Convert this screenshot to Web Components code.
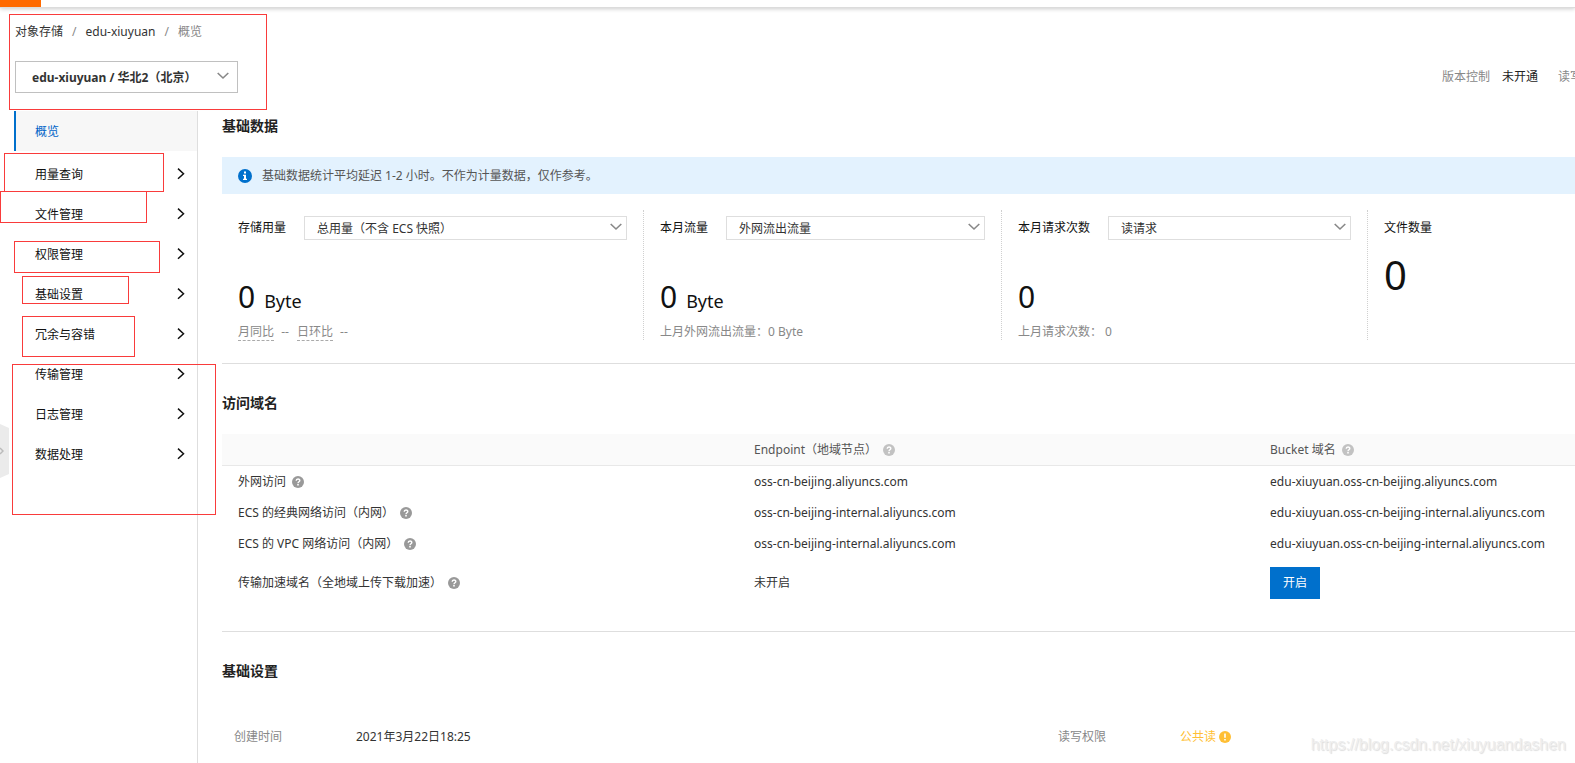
<!DOCTYPE html>
<html lang="zh-CN">
<head>
<meta charset="utf-8">
<meta name="viewport" content="width=device-width, initial-scale=1">
<title>对象存储 - 概览</title>
<style>
    body {
        margin: 0;
        background: #fff;
        color: #333;
        font: 12px/16px "Noto Sans", "Noto Sans CJK SC", sans-serif;
    }
</style>
</head>
<body>
<oss-console></oss-console>

<script>
    // Small helper: attach an open shadow root with styles and markup
    function render(element, css, html) {
        element.attachShadow({ mode: 'open' });
        const template = document.createElement('template');
        template.innerHTML = `<style>* { box-sizing: border-box; }${css}</style>${html}`;
        element.shadowRoot.appendChild(template.content.cloneNode(true));
    }

    // Icon set
    const icons = {
        down: '<svg width="12" height="8" viewBox="0 0 12 8" fill="none" stroke="currentColor" stroke-width="1.6"><path d="M.7 1 6 6 11.3 1"/></svg>',
        right: '<svg width="8" height="12" viewBox="0 0 8 12" fill="none" stroke="currentColor" stroke-width="1.5"><path d="M1 .6 6.5 5.7 1 10.8"/></svg>',
        help: '<svg width="12" height="12" viewBox="0 0 12 12"><circle cx="6" cy="6" r="6" fill="currentColor"/><path d="M4.2 4.8C4.2 2.5 7.8 2.5 7.8 4.6 7.8 5.8 6 5.8 6 7.2" fill="none" stroke="#fff" stroke-width="1.4"/><path d="M5.2 8h1.6v1.5H5.2z" fill="#fff"/></svg>',
        info: '<svg width="14" height="14" viewBox="0 0 14 14"><circle cx="7" cy="7" r="7" fill="currentColor"/><path d="M6 2.6h2v2H6zM5 5.7h3v4h1v1.4H5V9.7h1V7H5z" fill="#fff"/></svg>',
        warn: '<svg width="12" height="12" viewBox="0 0 12 12"><circle cx="6" cy="6" r="6" fill="currentColor"/><path d="M5.2 2.5h1.6v4.3H5.2zM5.2 7.9h1.6v1.6H5.2z" fill="#fff"/></svg>'
    };

    class OssIcon extends HTMLElement {
        constructor() {
            super();
            render(this, /*css*/`
                :host { display: inline-flex; flex: none; vertical-align: -2px; }
                svg { display: block; }
            `, icons[this.getAttribute('name')]);
        }
    }
    customElements.define('oss-icon', OssIcon);

    // Drop-down with an optional label in front
    class OssSelect extends HTMLElement {
        constructor() {
            super();
            const label = this.getAttribute('label');
            render(this, /*css*/`
                :host { display: flex; align-items: center; gap: 18px; color: #111; }
                label { flex: none; }
                .box { position: relative; flex: 1; min-width: 0; color: #888; }
                select {
                    display: block;
                    appearance: none;
                    width: 100%;
                    height: var(--select-height, 24px);
                    padding: 2px 24px 0 var(--select-indent, 12px);
                    border: 1px solid var(--select-border, #dedede);
                    border-radius: 0;
                    background: #fff;
                    color: #333;
                    font: inherit;
                }
                oss-icon { position: absolute; right: var(--select-arrow, 5px); top: 50%; margin-top: -5px; pointer-events: none; }
            `, `
                ${label ? `<label for="field">${label}</label>` : ''}
                <div class="box">
                    <select id="field" ${label ? '' : 'aria-label="Bucket"'}><option>${this.getAttribute('value')}</option></select>
                    <oss-icon name="down"></oss-icon>
                </div>
            `);
        }
    }
    customElements.define('oss-select', OssSelect);

    class OssTopbar extends HTMLElement {
        constructor() {
            super();
            render(this, /*css*/`
                :host { display: block; flex: none; border-bottom: 1px solid #dcdcdc; box-shadow: 0 1px 4px rgba(0, 0, 0, 0.2); }
                .brand { width: 41px; height: 7px; background: #ff6a00; }
            `, '<div class="brand"></div>');
        }
    }
    customElements.define('oss-topbar', OssTopbar);

    class OssHeader extends HTMLElement {
        constructor() {
            super();
            render(this, /*css*/`
                :host { display: block; padding: 16px 0 18px 15px; overflow: hidden; }
                nav { display: flex; gap: 9px; color: #888; }
                a { color: #333; text-decoration: none; }
                .row { display: flex; align-items: center; margin-top: 21px; }
                oss-select {
                    --select-height: 32px;
                    --select-indent: 16px;
                    --select-border: #c0c0c0;
                    --select-arrow: 9px;
                    width: 223px;
                    font-weight: bold;
                }
                .status { display: flex; gap: 12px; margin: 0 -7px 0 auto; color: #888; white-space: nowrap; }
                .status b { margin-right: 8px; color: #222; font-weight: normal; }
            `, /*html*/`
                <nav><a href="#">对象存储</a><span>/</span><a href="#">edu-xiuyuan</a><span>/</span><span>概览</span></nav>
                <div class="row">
                    <oss-select value="edu-xiuyuan / 华北2（北京）"></oss-select>
                    <div class="status"><span>版本控制</span><b>未开通</b><span>读写</span></div>
                </div>
            `);
        }
    }
    customElements.define('oss-header', OssHeader);

    class OssNav extends HTMLElement {
        constructor() {
            super();
            const items = ['用量查询', '文件管理', '权限管理', '基础设置', '冗余与容错', '传输管理', '日志管理', '数据处理'];
            render(this, /*css*/`
                :host { display: block; flex: none; width: 184px; margin-left: 14px; border-right: 1px solid #dedede; }
                a {
                    display: flex;
                    align-items: center;
                    justify-content: space-between;
                    height: 40px;
                    padding: 0 12px 0 21px;
                    color: #111;
                    text-decoration: none;
                }
                span { padding-top: 2px; }
                a.active {
                    margin-bottom: 3px;
                    padding-left: 19px;
                    border-left: 2px solid #0070cc;
                    background: #f7f7f7;
                    color: #0064c8;
                }
            `, `
                <nav>
                    <a class="active" href="#"><span>概览</span></a>
                    ${items.map(item => `<a href="#"><span>${item}</span><oss-icon name="right"></oss-icon></a>`).join('')}
                </nav>
            `);
        }
    }
    customElements.define('oss-nav', OssNav);

    class OssSection extends HTMLElement {
        constructor() {
            super();
            render(this, /*css*/`
                :host { display: block; padding: 29px 0 23px; border-bottom: 1px solid #dedede; }
                :host(:first-child) { padding-top: 5px; }
                :host(:last-child) { border-bottom: 0; padding-bottom: 0; }
                h2 { margin: 0 0 21px; color: #222; font-size: 14px; line-height: 20px; font-weight: bold; }
            `, `<h2>${this.getAttribute('heading')}</h2><slot></slot>`);
        }
    }
    customElements.define('oss-section', OssSection);

    class OssNotice extends HTMLElement {
        constructor() {
            super();
            render(this, /*css*/`
                :host { display: flex; align-items: center; gap: 10px; height: 37px; padding: 0 16px; background: #e3f2fe; color: #555; }
                oss-icon { color: #0070cc; }
            `, '<oss-icon name="info"></oss-icon><span><slot></slot></span>');
        }
    }
    customElements.define('oss-notice', OssNotice);

    // One figure: title or drop-down, value with unit, and a footer line in the slot
    class OssMetric extends HTMLElement {
        constructor() {
            super();
            const label = this.getAttribute('label');
            const value = this.getAttribute('value');
            const unit = this.getAttribute('unit');
            render(this, /*css*/`
                :host { display: block; height: 130px; padding: 6px 16px 0; border-right: 1px dotted #d0d0d0; color: #111; }
                :host(:last-child) { border-right: 0; }
                .title { line-height: 24px; }
                .value { display: flex; align-items: baseline; gap: 9px; margin: 37px 0 7px; font-size: 30px; line-height: 40px; }
                .unit { font-size: 18px; line-height: 20px; }
                .title + .value { margin-top: 15px; font-size: 40px; }
                .note { color: #888; }
            `, `
                ${value ? `<oss-select label="${label}" value="${value}"></oss-select>` : `<div class="title">${label}</div>`}
                <div class="value"><span>0</span>${unit ? `<span class="unit">${unit}</span>` : ''}</div>
                <div class="note"><slot></slot></div>
            `);
        }
    }
    customElements.define('oss-metric', OssMetric);

    class OssDomains extends HTMLElement {
        constructor() {
            super();
            const rows = [
                ['外网访问', 'oss-cn-beijing.aliyuncs.com'],
                ['ECS 的经典网络访问（内网）', 'oss-cn-beijing-internal.aliyuncs.com'],
                ['ECS 的 VPC 网络访问（内网）', 'oss-cn-beijing-internal.aliyuncs.com']
            ];
            const help = '<oss-icon name="help"></oss-icon>';
            render(this, /*css*/`
                :host { display: block; }
                table { width: 100%; border-collapse: separate; border-spacing: 0; table-layout: fixed; }
                col.main { width: 38.14%; }
                th, td { height: 31px; padding: 0 0 0 16px; text-align: left; white-space: nowrap; font-weight: normal; }
                thead td, thead th { height: 32px; border-bottom: 1px solid #e8e8e8; background: #fafafa; color: #555; }
                oss-icon { margin-left: 6px; color: #999; }
                thead oss-icon { color: #c2c2c2; }
                tr.last > * { height: 49px; padding-bottom: 2px; }
                button { display: block; width: 50px; height: 32px; padding: 0; border: 0; background: #0070cc; color: #fff; font: inherit; }
            `, `
                <table>
                    <colgroup><col class="main"><col class="main"><col></colgroup>
                    <thead><tr><td></td><th>Endpoint（地域节点）${help}</th><th>Bucket 域名${help}</th></tr></thead>
                    <tbody>
                        ${rows.map(([name, host]) => `<tr><th>${name}${help}</th><td>${host}</td><td>edu-xiuyuan.${host}</td></tr>`).join('')}
                        <tr class="last"><th>传输加速域名（全地域上传下载加速）${help}</th><td>未开启</td><td><button type="button">开启</button></td></tr>
                    </tbody>
                </table>
            `);
        }
    }
    customElements.define('oss-domains', OssDomains);

    class OssSettings extends HTMLElement {
        constructor() {
            super();
            render(this, /*css*/`
                :host { display: block; padding: 27px 0 18px 12px; }
                dl { display: grid; grid-template-columns: 122px 702fr 122px 395fr; margin: 0; }
                dt { color: #888; }
                dd { margin: 0; }
                .warn { color: #ffbf35; }
            `, /*html*/`
                <dl>
                    <dt>创建时间</dt><dd>2021年3月22日18:25</dd>
                    <dt>读写权限</dt><dd class="warn">公共读 <oss-icon name="warn"></oss-icon></dd>
                </dl>
            `);
        }
    }
    customElements.define('oss-settings', OssSettings);

    // Red marker frame laid over the page
    class MarkBox extends HTMLElement {
        constructor() {
            super();
            const [x, y, width, height] = this.getAttribute('area').split(' ');
            render(this, `
                :host {
                    position: absolute;
                    left: ${x}px;
                    top: ${y}px;
                    width: ${width}px;
                    height: ${height}px;
                    border: 1px solid #f93b3b;
                    box-sizing: border-box;
                    pointer-events: none;
                }
            `, '');
        }
    }
    customElements.define('mark-box', MarkBox);

    class OssConsole extends HTMLElement {
        constructor() {
            super();
            render(this, /*css*/`
                :host { position: relative; display: flex; flex-direction: column; min-height: 100vh; overflow: hidden; }
                .body { display: flex; flex: 1; }
                main { flex: 1; min-width: 0; padding-left: 24px; }
                .metrics { display: grid; grid-template-columns: 422fr 358fr 366fr 207fr; margin-top: 16px; }
                .trend { margin-right: 4px; border-bottom: 1px dashed #aaa; }
                .gap { margin-left: 5px; }
                .handle {
                    position: absolute;
                    left: 0;
                    top: 424px;
                    width: 9px;
                    height: 54px;
                    padding: 0;
                    border: 0;
                    background: #ebebeb;
                    color: #bbb;
                    clip-path: polygon(0 0, 100% 4px, 100% 50px, 0 100%);
                }
                .handle svg { display: block; }
                .watermark {
                    position: absolute;
                    right: 9px;
                    bottom: 8px;
                    color: #eee;
                    font: 16px/20px "Liberation Sans", Arial, sans-serif;
                    text-shadow: 1px 1px 1px #ddd;
                }
            `, /*html*/`
                <oss-topbar></oss-topbar>
                <oss-header></oss-header>
                <div class="body">
                    <oss-nav></oss-nav>
                    <main>
                        <oss-section heading="基础数据">
                            <oss-notice>基础数据统计平均延迟 1-2 小时。不作为计量数据，仅作参考。</oss-notice>
                            <div class="metrics">
                                <oss-metric label="存储用量" value="总用量（不含 ECS 快照）" unit="Byte">
                                    <span class="trend">月同比</span> --
                                    <span class="trend gap">日环比</span> --
                                </oss-metric>
                                <oss-metric label="本月流量" value="外网流出流量" unit="Byte">上月外网流出流量：0 Byte</oss-metric>
                                <oss-metric label="本月请求次数" value="读请求">上月请求次数： 0</oss-metric>
                                <oss-metric label="文件数量"></oss-metric>
                            </div>
                        </oss-section>
                        <oss-section heading="访问域名"><oss-domains></oss-domains></oss-section>
                        <oss-section heading="基础设置"><oss-settings></oss-settings></oss-section>
                    </main>
                </div>
                <button class="handle" type="button" aria-label="展开">
                    <svg width="4" height="8" viewBox="0 0 4 8" fill="none" stroke="currentColor" stroke-width="1.5"><path d="M0 1l3 3-3 3"/></svg>
                </button>
                <mark-box area="9 14 258 96"></mark-box>
                <mark-box area="4 153 160 39"></mark-box>
                <mark-box area="0 191 147 32"></mark-box>
                <mark-box area="14 241 146 32"></mark-box>
                <mark-box area="22 276 107 28"></mark-box>
                <mark-box area="22 316 113 41"></mark-box>
                <mark-box area="12 364 204 151"></mark-box>
                <div class="watermark">https://blog.csdn.net/xiuyuandashen</div>
            `);
        }
    }
    customElements.define('oss-console', OssConsole);
</script>
</body>
</html>
